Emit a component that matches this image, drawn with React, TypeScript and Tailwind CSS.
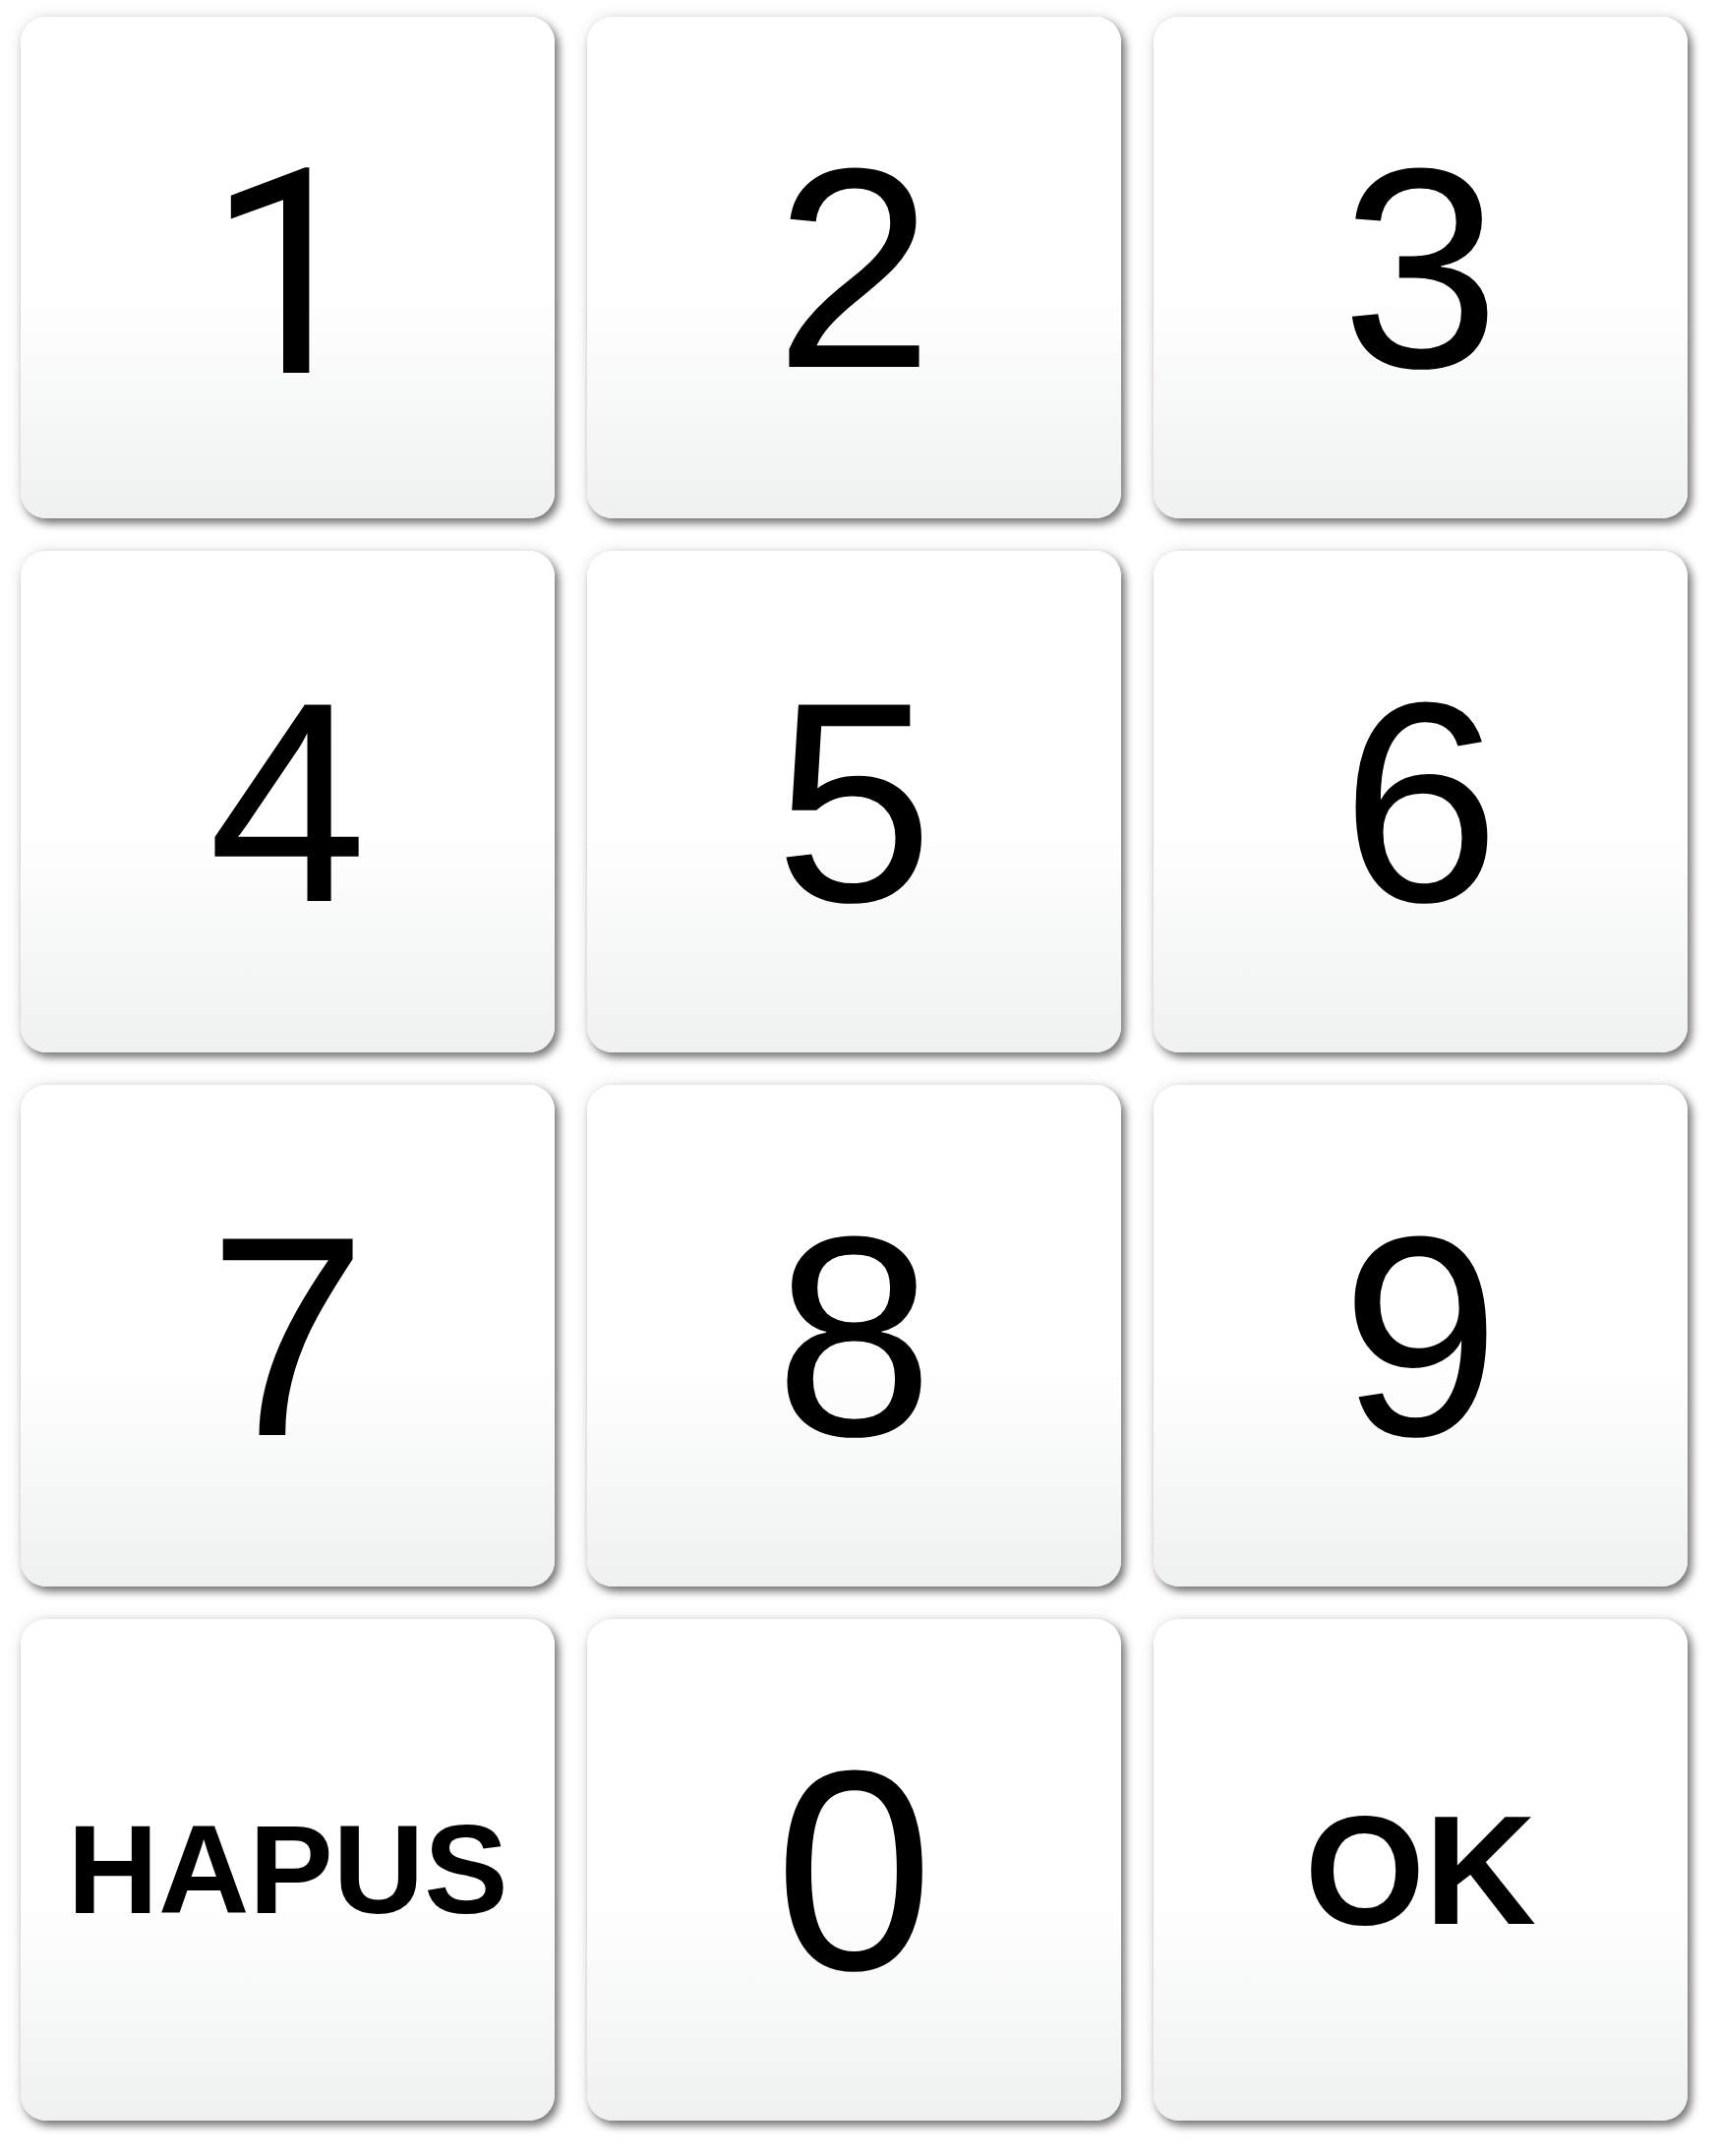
import React from "react";

type Kind = "digit" | "hapus" | "ok";

const keys: { label: string; kind: Kind }[] = [
  { label: "1", kind: "digit" },
  { label: "2", kind: "digit" },
  { label: "3", kind: "digit" },
  { label: "4", kind: "digit" },
  { label: "5", kind: "digit" },
  { label: "6", kind: "digit" },
  { label: "7", kind: "digit" },
  { label: "8", kind: "digit" },
  { label: "9", kind: "digit" },
  { label: "HAPUS", kind: "hapus" },
  { label: "0", kind: "digit" },
  { label: "OK", kind: "ok" },
];

function Key({ label, kind }: { label: string; kind: Kind }) {
  const text =
    kind === "digit"
      ? label === "1"
        ? "text-[292px] font-normal font-['Roboto',Arial,sans-serif]"
        : "text-[290px] font-normal font-['Liberation_Sans',Arial,sans-serif]"
      : kind === "hapus"
      ? "text-[128px] font-bold font-['Liberation_Sans',Arial,sans-serif]"
      : "text-[157px] font-bold font-['Liberation_Sans',Arial,sans-serif]";
  return (
    <button
      type="button"
      className={`flex items-center justify-center rounded-[26px] bg-linear-to-b from-white via-white via-55% to-[#eff1f1] text-black leading-none shadow-[4px_5px_8px_rgba(0,0,0,0.52),0_0_16px_rgba(0,0,0,0.1)] ${text}`}
    >
      <span className={`block leading-none ${label === "1" ? "mt-[14px]" : ""}`}>{label}</span>
    </button>
  );
}

export default function App() {
  return (
    <div className="w-[1750px] h-[2192px] bg-white pl-[21px] pt-[17px]">
      <div className="grid grid-cols-[repeat(3,543px)] grid-rows-[repeat(4,510px)] gap-[33px]">
        {keys.map((k) => (
          <Key key={k.label} label={k.label} kind={k.kind} />
        ))}
      </div>
    </div>
  );
}
